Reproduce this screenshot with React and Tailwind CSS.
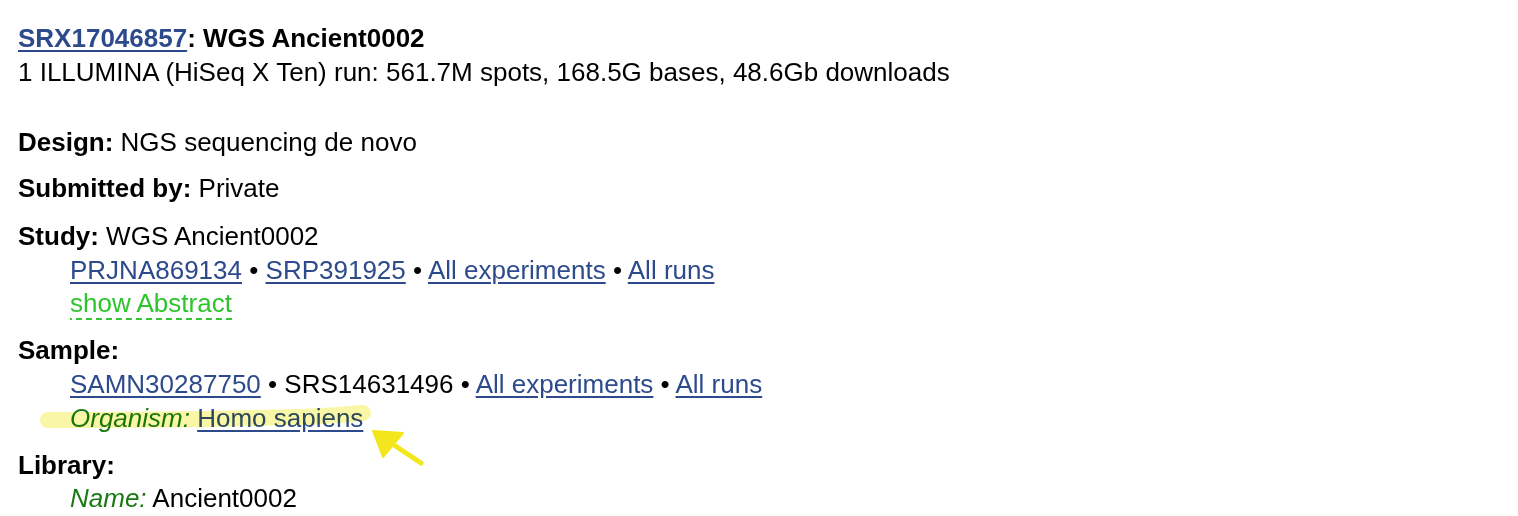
import React from 'react'

const link = 'text-[#2c4a8c] underline decoration-[#2c4a8c] underline-offset-[3px]'

function Annotation() {
  // marker stroke + arrow drawn over the screenshot
  return (
    <svg className="pointer-events-none absolute left-0 top-0 h-[516px] w-[1518px]" viewBox="0 0 1518 516">
      <path
        d="M48 420 C120 420 220 419 300 417 C330 416 352 414 363 413"
        stroke="#f2ee3a"
        strokeOpacity="0.45"
        strokeWidth="16"
        strokeLinecap="round"
        fill="none"
        style={{ mixBlendMode: 'multiply' }}
      />
      <path d="M421 463 L388 441" stroke="#f3e61c" strokeWidth="5" strokeLinecap="round" />
      <path d="M373 431 L403 433 L383 457 Z" fill="#f3e61c" stroke="#f3e61c" strokeWidth="2" strokeLinejoin="round" />
    </svg>
  )
}

export default function App() {
  return (
    <div
      className="relative h-[516px] w-[1518px] overflow-hidden bg-white pl-[18px] pt-[21px] text-[26px] leading-[34px] text-black"
      style={{ fontFamily: '"Liberation Sans", Arial, sans-serif' }}
    >
      <div className="font-bold">
        <a href="#" className={link}>SRX17046857</a>: WGS Ancient0002
      </div>
      <div>1 ILLUMINA (HiSeq X Ten) run: 561.7M spots, 168.5G bases, 48.6Gb downloads</div>

      <div className="mt-[36px]">
        <span className="font-bold">Design:</span> NGS sequencing de novo
      </div>
      <div className="mt-[12px]">
        <span className="font-bold">Submitted by:</span> Private
      </div>
      <div className="mt-[14px]">
        <div>
          <span className="font-bold">Study:</span> WGS Ancient0002
        </div>
        <div className="pl-[52px]">
          <a href="#" className={link}>PRJNA869134</a> • <a href="#" className={link}>SRP391925</a> •{' '}
          <a href="#" className={link}>All experiments</a> • <a href="#" className={link}>All runs</a>
        </div>
        <div className="pl-[52px] leading-[33px]">
          <span className="bg-[linear-gradient(to_right,#33c433_65%,transparent_65%)] bg-[length:10px_2px] bg-bottom bg-repeat-x pb-[2px] text-[#2ec42e]">
            show Abstract
          </span>
        </div>
      </div>
      <div className="mt-[13px]">
        <div className="font-bold">Sample:</div>
        <div className="pl-[52px]">
          <a href="#" className={link}>SAMN30287750</a> • SRS14631496 •{' '}
          <a href="#" className={link}>All experiments</a> • <a href="#" className={link}>All runs</a>
        </div>
        <div className="pl-[52px]">
          <span className="italic text-[#1a7a12]">Organism:</span>{' '}
          <a href="#" className={link}>Homo sapiens</a>
        </div>
      </div>
      <div className="mt-[13px]">
        <div className="font-bold">Library:</div>
        <div className="pl-[52px] leading-[33px]">
          <span className="italic text-[#1a7a12]">Name:</span> Ancient0002
        </div>
      </div>
      <Annotation />
    </div>
  )
}
